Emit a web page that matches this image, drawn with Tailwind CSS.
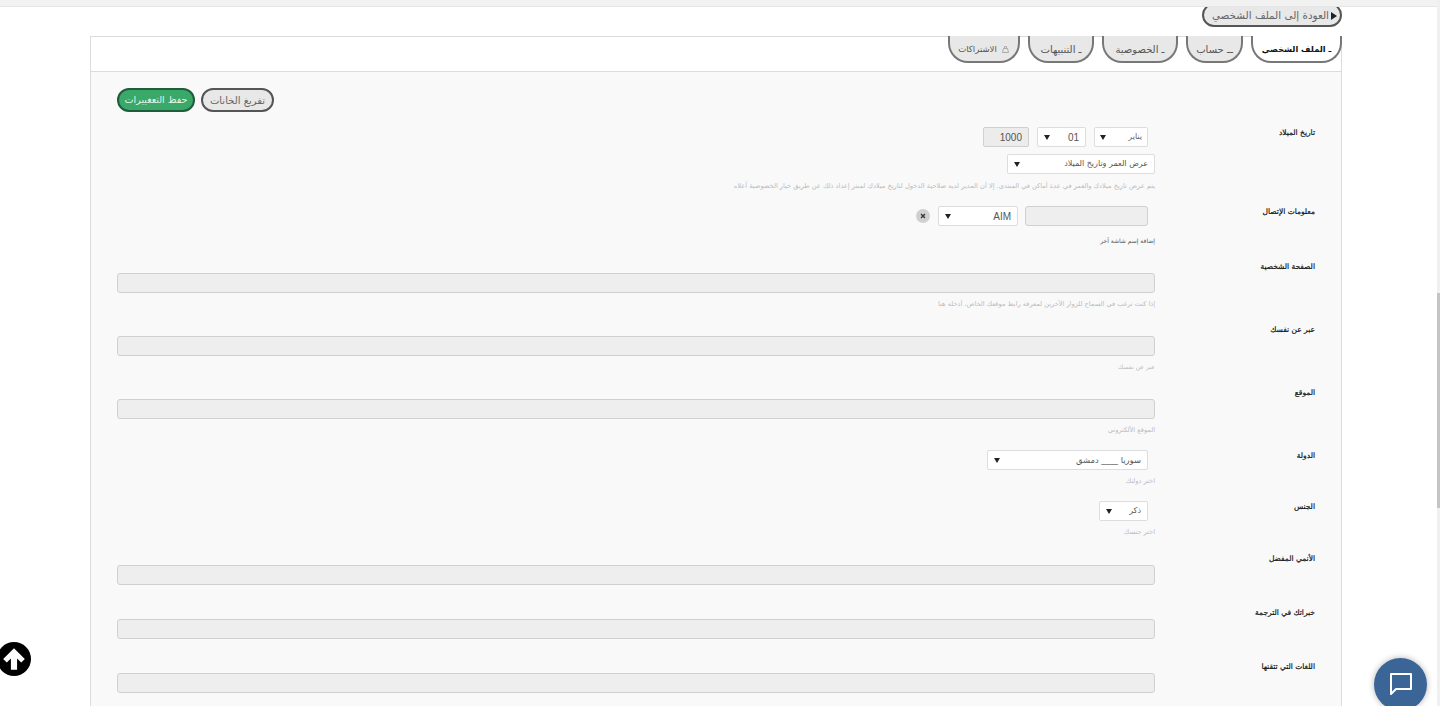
<!DOCTYPE html>
<html lang="ar" dir="rtl">
<head>
    <meta charset="UTF-8">
    <meta name="viewport" content="width=device-width, initial-scale=1.0">
    <title>الملف الشخصي</title>
    <script src="https://cdn.jsdelivr.net/npm/@tailwindcss/browser@4"></script>
</head>
<body class="h-screen overflow-hidden bg-white font-['DejaVu_Sans',sans-serif] text-[#333]">
    <!-- top strip -->
    <div class="h-[7px] bg-[#f2f2f2] border-b border-[#e6e6e6]"></div>

    <div class="mr-[98px] ml-[90px]">
        <!-- back button, its top is cut by the strip -->
        <div class="h-[29px]">
            <div class="h-[20px] w-[140px] overflow-hidden">
                <a class="flex h-[24px] -mt-[4px] pt-px items-center gap-[2px] rounded-full border-2 border-[#555] bg-[#e8e8e8] pr-[3px] text-[10.4px] text-[#666] whitespace-nowrap">
                    <svg class="w-[6px] h-[8px]" viewBox="0 0 6 8"><path d="M0 0 L6 4 L0 8 Z" fill="#222"/></svg>
                    العودة إلى الملف الشخصي
                </a>
            </div>
        </div>

        <div class="border border-[#dcdcdc] bg-[#f9f9f9] h-[800px]">
            <!-- tabs -->
            <div class="h-[35px] bg-white border-b border-[#dcdcdc] flex gap-[8px] items-start">
                <a class="w-[91px] h-[27px] -mt-px -mr-px pt-[2px] flex items-center justify-center rounded-b-[20px] border-2 border-t-0 border-[#777] bg-white text-[8.2px] font-bold text-[#111]">ـ الملف الشخصي</a>
                <a class="w-[57px] h-[27px] -mt-px pt-[2px] flex items-center justify-center rounded-b-[20px] border-2 border-t-0 border-[#777] bg-[#e8e8e8] text-[10px] text-[#555]">ــ حساب</a>
                <a class="w-[76px] h-[27px] -mt-px pt-[2px] flex items-center justify-center rounded-b-[20px] border-2 border-t-0 border-[#777] bg-[#e8e8e8] text-[10px] text-[#555]">ـ الخصوصية</a>
                <a class="w-[66px] h-[27px] -mt-px pt-[2px] flex items-center justify-center rounded-b-[20px] border-2 border-t-0 border-[#777] bg-[#e8e8e8] text-[10px] text-[#555]">ـ التنبيهات</a>
                <a class="w-[72px] h-[27px] -mt-px pt-[2px] flex items-center justify-center gap-1 rounded-b-[20px] border-2 border-t-0 border-[#777] bg-[#e8e8e8] text-[8.5px] text-[#555]">
                    <svg class="w-[9px] h-[9px]" viewBox="0 0 9 9" fill="none" stroke="#aaa"><path d="M1.5 7.5 L2.5 3.5 H6.5 L7.5 7.5 Z M3.5 3.5 V1.5 H5.5 V3.5"/></svg>
                    الاشتراكات
                </a>
            </div>

            <!-- form -->
            <div class="pr-[26px] pl-[26px]">
                <div class="flex justify-end gap-[6px] pt-[16px] h-[55px]">
                    <button class="w-[73px] h-[24px] rounded-full border-2 border-[#555] bg-[#e8e8e8] text-[10px] text-[#666]">تفريغ الخانات</button>
                    <button class="w-[78px] h-[24px] rounded-full border-2 border-[#1f5c3c] bg-[#3aa868] text-[9.5px] text-[#e4f5ea]">حفظ التعغييرات</button>
                </div>

                <!-- birthday -->
                <div class="flex">
                    <label class="w-[160px] shrink-0 h-[10px] mt-[1px] text-[7.5px] leading-[10px] text-[#111] [-webkit-text-stroke:0.2px]">تاريخ الميلاد</label>
                    <div class="flex-1">
                        <div class="flex gap-[8px] pr-[7px]">
                            <div class="w-[54px] h-[20px] flex items-center justify-between px-[5px] bg-white border border-[#ddd] rounded-[2px] text-[8px] text-[#666]"><span>يناير</span><svg class="w-[6px] h-[5px]" viewBox="0 0 6 5"><path d="M0 0H6L3 5Z" fill="#222"/></svg></div>
                            <div class="w-[49px] h-[20px] flex items-center justify-between px-[6px] bg-white border border-[#ddd] rounded-[2px] text-[10px] font-['Liberation_Sans'] text-[#555]"><span>01</span><svg class="w-[6px] h-[5px]" viewBox="0 0 6 5"><path d="M0 0H6L3 5Z" fill="#222"/></svg></div>
                            <input value="1000" class="w-[46px] h-[20px] px-[6px] bg-[#ececec] border border-[#d0d0d0] rounded-[2px] text-[10px] font-['Liberation_Sans'] text-right text-[#555]">
                        </div>
                        <div class="mt-[7px] w-[148px] h-[20px] flex items-center justify-between px-[6px] bg-white border border-[#ddd] rounded-[2px] text-[8px] text-[#555] whitespace-nowrap"><span>عرض العمر وتاريخ الميلاد</span><svg class="w-[6px] h-[5px]" viewBox="0 0 6 5"><path d="M0 0H6L3 5Z" fill="#222"/></svg></div>
                        <p class="mt-[7px] h-[10px] text-[6.65px] leading-[10px] text-[#bbb] whitespace-nowrap">يتم عرض تاريخ ميلادك والعمر في عدة أماكن في المنتدى. إلا أن المدير لديه صلاحية الدخول لتاريخ ميلادك لمنتر إعداد ذلك عن طريق خيار الخصوصية أعلاه</p>
                    </div>
                </div>

                <!-- contact -->
                <div class="flex mt-[15px]">
                    <label class="w-[160px] shrink-0 h-[10px] mt-[1px] text-[7.5px] leading-[10px] text-[#111] [-webkit-text-stroke:0.2px]">معلومات الإتصال</label>
                    <div class="flex-1">
                        <div class="flex items-center gap-[7px] pr-[7px]">
                            <input class="w-[123px] h-[20px] bg-[#eeeeee] border border-[#d0d0d0] rounded-[3px]">
                            <div class="w-[80px] h-[20px] flex items-center justify-between px-[6px] bg-white border border-[#ddd] rounded-[2px] text-[10px] font-['Liberation_Sans'] text-[#555]"><span>AIM</span><svg class="w-[6px] h-[5px]" viewBox="0 0 6 5"><path d="M0 0H6L3 5Z" fill="#222"/></svg></div>
                            <span class="w-[14px] h-[14px] mr-[1px] rounded-full bg-[#d0d0d0] flex items-center justify-center">
                                <svg class="w-[6px] h-[6px]" viewBox="0 0 6 6"><path d="M1 1L5 5M5 1L1 5" stroke="#333" stroke-width="1.3"/></svg>
                            </span>
                        </div>
                        <p class="mt-[10px] h-[10px] text-[6px] leading-[10px] text-[#555]">إضافة إسم شاشة آخر</p>
                    </div>
                </div>

                <!-- homepage -->
                <div class="flex mt-[15px]">
                    <label class="w-[160px] shrink-0 h-[10px] mt-[1px] text-[7.5px] leading-[10px] text-[#111] [-webkit-text-stroke:0.2px]">الصفحة الشخصية</label>
                    <div class="flex-1 pt-[12px]">
                        <input class="block w-full h-[20px] bg-[#eeeeee] border border-[#d0d0d0] rounded-[3px]">
                        <p class="mt-[6px] h-[10px] text-[6.6px] leading-[10px] text-[#bbb]">إذا كنت ترغب في السماح للزوار الآخرين لمعرفة رابط موقعك الخاص، أدخله هنا</p>
                    </div>
                </div>

                <!-- bio -->
                <div class="flex mt-[15px]">
                    <label class="w-[160px] shrink-0 h-[10px] mt-[1px] text-[7.5px] leading-[10px] text-[#111] [-webkit-text-stroke:0.2px]">عبر عن نفسك</label>
                    <div class="flex-1 pt-[12px]">
                        <input class="block w-full h-[20px] bg-[#eeeeee] border border-[#d0d0d0] rounded-[3px]">
                        <p class="mt-[6px] h-[10px] text-[6.2px] leading-[10px] text-[#bbb]">عبر عن نفسك</p>
                    </div>
                </div>

                <!-- website -->
                <div class="flex mt-[15px]">
                    <label class="w-[160px] shrink-0 h-[10px] mt-[1px] text-[7.5px] leading-[10px] text-[#111] [-webkit-text-stroke:0.2px]">الموقع</label>
                    <div class="flex-1 pt-[12px]">
                        <input class="block w-full h-[20px] bg-[#eeeeee] border border-[#d0d0d0] rounded-[3px]">
                        <p class="mt-[6px] h-[10px] text-[6.6px] leading-[10px] text-[#bbb]">الموقع الألكتروني</p>
                    </div>
                </div>

                <!-- country -->
                <div class="flex mt-[15px]">
                    <label class="w-[160px] shrink-0 h-[10px] mt-[1px] text-[7.5px] leading-[10px] text-[#111] [-webkit-text-stroke:0.2px]">الدولة</label>
                    <div class="flex-1">
                        <div class="pr-[7px]">
                            <div class="w-[161px] h-[20px] flex items-center justify-between px-[6px] bg-white border border-[#ddd] rounded-[2px] text-[8.4px] text-[#555]"><span>سوريا ____ دمشق</span><svg class="w-[6px] h-[5px]" viewBox="0 0 6 5"><path d="M0 0H6L3 5Z" fill="#222"/></svg></div>
                        </div>
                        <p class="mt-[6px] h-[10px] text-[6.6px] leading-[10px] text-[#bbb]">اختر دولتك</p>
                    </div>
                </div>

                <!-- gender -->
                <div class="flex mt-[15px]">
                    <label class="w-[160px] shrink-0 h-[10px] mt-[1px] text-[7.5px] leading-[10px] text-[#111] [-webkit-text-stroke:0.2px]">الجنس</label>
                    <div class="flex-1">
                        <div class="pr-[7px]">
                            <div class="w-[49px] h-[20px] flex items-center justify-between px-[6px] bg-white border border-[#ddd] rounded-[2px] text-[8px] text-[#555]"><span>ذكر</span><svg class="w-[6px] h-[5px]" viewBox="0 0 6 5"><path d="M0 0H6L3 5Z" fill="#222"/></svg></div>
                        </div>
                        <p class="mt-[6px] h-[10px] text-[6.6px] leading-[10px] text-[#bbb]">اختر جنسك</p>
                    </div>
                </div>

                <!-- anime -->
                <div class="flex mt-[16px]">
                    <label class="w-[160px] shrink-0 h-[10px] mt-[1px] text-[7.5px] leading-[10px] text-[#111] [-webkit-text-stroke:0.2px]">الأنمي المفضل</label>
                    <div class="flex-1 pt-[12px]">
                        <input class="block w-full h-[20px] bg-[#eeeeee] border border-[#d0d0d0] rounded-[3px]">
                    </div>
                </div>

                <!-- experience -->
                <div class="flex mt-[22px]">
                    <label class="w-[160px] shrink-0 h-[10px] mt-[1px] text-[7.5px] leading-[10px] text-[#111] [-webkit-text-stroke:0.2px]">خبراتك في الترجمة</label>
                    <div class="flex-1 pt-[12px]">
                        <input class="block w-full h-[20px] bg-[#eeeeee] border border-[#d0d0d0] rounded-[3px]">
                    </div>
                </div>

                <!-- languages -->
                <div class="flex mt-[22px]">
                    <label class="w-[160px] shrink-0 h-[10px] mt-[1px] text-[7.5px] leading-[10px] text-[#111] [-webkit-text-stroke:0.2px]">اللغات التي تتقنها</label>
                    <div class="flex-1 pt-[12px]">
                        <input class="block w-full h-[20px] bg-[#eeeeee] border border-[#d0d0d0] rounded-[3px]">
                    </div>
                </div>
            </div>
        </div>
    </div>

    <!-- scrollbar -->
    <div class="fixed top-0 right-0 w-[3px] h-full bg-[#f0f0f0]"><div class="mt-[293px] h-[215px] bg-[#c4c4c4]"></div></div>

    <!-- back to top -->
    <svg class="fixed left-[-3px] top-[642px] w-[34px] h-[34px]" viewBox="0 0 33 33">
        <circle cx="16.5" cy="16.5" r="16.5" fill="#000"/>
        <path d="M16.5 6 L27 16.5 L23.5 20 L19.5 16 V27 H13.5 V16 L9.5 20 L6 16.5 Z" fill="#fff"/>
    </svg>

    <!-- chat bubble -->
    <div class="fixed left-[1374px] top-[658px] w-[53px] h-[53px] rounded-full bg-[#3b6596] shadow-[0_0_6px_rgba(0,0,0,0.3)] flex items-center justify-center">
        <svg class="w-[24px] h-[24px] -mt-[3px]" viewBox="0 0 24 24" fill="none" stroke="#fff" stroke-width="2" stroke-linejoin="round"><path d="M2 3 H22 V18 H7 L2 23 Z"/></svg>
    </div>
</body>
</html>
